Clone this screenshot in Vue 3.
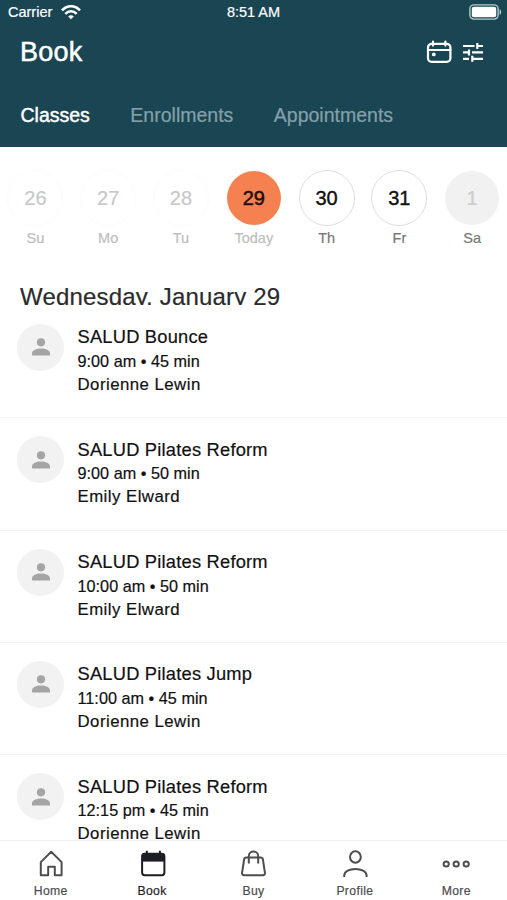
<template>
  <div class="screen">
    <header class="header">
      <div class="status">
        <div class="carrier">
          <span>Carrier</span>
          <svg width="20" height="15" viewBox="0 0 20 15" fill="none" stroke="#fff" stroke-width="2.5">
            <path d="M1 5.4C6-.2 14-.2 19 5.4" />
            <path d="M4.3 8.8c3.3-3.4 8.1-3.4 11.4 0" />
            <path d="M10 14.3 7.2 11.4c1.6-1.5 4-1.5 5.6 0Z" fill="#fff" stroke="none" />
          </svg>
        </div>
        <span class="clock">8:51 AM</span>
        <svg class="battery" width="33" height="16" viewBox="0 0 33 16">
          <rect x=".9" y=".9" width="28.2" height="14.2" rx="4" fill="none" stroke="#bacbd0" stroke-width="1.4" />
          <rect x="2.8" y="2.8" width="24.4" height="10.4" rx="2" fill="#fff" />
          <path d="M30.6 5.2c2 .8 2 4.8 0 5.6Z" fill="#c5d3d7" />
        </svg>
      </div>

      <div class="title-row">
        <h1>Book</h1>
        <div class="actions">
          <svg width="26" height="24" viewBox="0 0 26 24" fill="none" stroke="#fff" stroke-width="2.2" stroke-linecap="round">
            <rect x="2" y="3.8" width="22.4" height="18" rx="3.6" />
            <path d="M2 10h22.4M7 1.6v4M19.4 1.6v4" />
            <circle cx="7.8" cy="14.4" r="1.9" fill="#fff" stroke="none" />
          </svg>
          <svg width="20" height="20" viewBox="0 0 20 20" fill="none" stroke="#fff" stroke-width="2.2">
            <path d="M0 4h11.5M14.3 4H20M14.3 1v6M0 10.4h6M6 7.4v6M9 10.4h11M0 16.8h6M9.3 16.8H20M9.3 13.8v6" />
          </svg>
        </div>
      </div>

      <nav class="tabs">
        <span v-for="(tab, i) in tabs" :key="tab" :class="{ active: i === 0 }">{{ tab }}</span>
      </nav>
    </header>

    <section class="week">
      <div v-for="day in days" :key="day.num" class="day" :class="day.state">
        <span class="num">{{ day.num }}</span>
        <span class="name">{{ day.name }}</span>
      </div>
    </section>

    <h2 class="date-title">Wednesday, January 29</h2>

    <main class="list">
      <article v-for="(item, i) in classes" :key="i" class="item">
        <div class="avatar">
          <svg width="18" height="18" viewBox="0 0 18 18" fill="#a5a5a5">
            <circle cx="9" cy="4.3" r="4.1" />
            <path d="M0 17.6v-2.2c0-3.2 4.5-4.8 9-4.8s9 1.6 9 4.8v2.2Z" />
          </svg>
        </div>
        <div class="info">
          <div class="class-name">{{ item.name }}</div>
          <div class="time">{{ item.time }} • {{ item.length }} min</div>
          <div class="teacher">{{ item.teacher }}</div>
        </div>
      </article>
    </main>

    <footer class="bottom-nav">
      <div class="nav-item">
        <svg width="30" height="30" viewBox="0 0 30 30">
          <path d="M4.8 26.2V13.1L15.2 2.8l10.4 10.3v13.1h-6.8v-8.4h-6.6v8.4Z" />
        </svg>
        <span>Home</span>
      </div>
      <div class="nav-item current">
        <svg width="30" height="30" viewBox="0 0 30 30">
          <rect x="5.1" y="4.8" width="22.3" height="21.4" rx="2.6" />
          <path d="M5 5h22.4v7.6H5Z" fill="#1d1e25" stroke="none" />
          <path d="M9.8 1.8V6M22.9 1.8V6" />
        </svg>
        <span>Book</span>
      </div>
      <div class="nav-item">
        <svg width="30" height="30" viewBox="0 0 30 30">
          <path d="M8.3 8.6h14.4c1.3 0 2 .6 2.2 1.8l2 13.2c.3 1.6-.6 2.6-2 2.6H6.1c-1.4 0-2.3-1-2-2.6l2-13.2c.2-1.2.9-1.8 2.2-1.8Z" />
          <path d="M10.8 14.5V7.2c0-6.2 9.4-6.2 9.4 0v7.3" />
        </svg>
        <span>Buy</span>
      </div>
      <div class="nav-item">
        <svg width="30" height="30" viewBox="0 0 30 30">
          <ellipse cx="15.4" cy="8" rx="5.4" ry="5.7" />
          <path d="M4.2 28v-1.3c0-9 22.4-9 22.4 0V28" />
        </svg>
        <span>Profile</span>
      </div>
      <div class="nav-item">
        <svg width="30" height="30" viewBox="0 0 30 30">
          <circle cx="5.2" cy="15" r="2.6" />
          <circle cx="15.2" cy="15" r="2.6" />
          <circle cx="25.2" cy="15" r="2.6" />
        </svg>
        <span>More</span>
      </div>
    </footer>
  </div>
</template>

<script setup>
const tabs = ['Classes', 'Enrollments', 'Appointments']

const days = [
  { num: 26, name: 'Su', state: 'past' },
  { num: 27, name: 'Mo', state: 'past' },
  { num: 28, name: 'Tu', state: 'past' },
  { num: 29, name: 'Today', state: 'today' },
  { num: 30, name: 'Th', state: 'open' },
  { num: 31, name: 'Fr', state: 'open' },
  { num: 1, name: 'Sa', state: 'closed' },
]

const classes = [
  { name: 'SALUD Bounce', time: '9:00 am', length: 45, teacher: 'Dorienne Lewin' },
  { name: 'SALUD Pilates Reform', time: '9:00 am', length: 50, teacher: 'Emily Elward' },
  { name: 'SALUD Pilates Reform', time: '10:00 am', length: 50, teacher: 'Emily Elward' },
  { name: 'SALUD Pilates Jump', time: '11:00 am', length: 45, teacher: 'Dorienne Lewin' },
  { name: 'SALUD Pilates Reform', time: '12:15 pm', length: 45, teacher: 'Dorienne Lewin' },
]
</script>

<style>
body {
  margin: 0;
  overflow: hidden;
}
</style>

<style scoped>
.screen {
  width: 507px;
  height: 900px;
  display: flex;
  flex-direction: column;
  overflow: hidden;
  background: #fff;
  color: #111;
  font-family: 'Liberation Sans', Arial, sans-serif;
}

/* header */
.header {
  flex: none;
  height: 147px;
  box-sizing: border-box;
  background: #1a4552;
  color: #fff;
}
.status {
  display: grid;
  grid-template-columns: 1fr auto 1fr;
  align-items: center;
  height: 24px;
  padding: 0 5px 0 8px;
  font-size: 14.5px;
  -webkit-text-stroke: 0.2px;
}
.carrier {
  display: flex;
  align-items: center;
  gap: 9px;
}
.clock {
  margin-left: -3px;
}
.battery {
  justify-self: end;
}
.title-row {
  display: flex;
  align-items: center;
  justify-content: space-between;
  height: 56px;
  padding: 0 24px 0 20px;
}
h1 {
  margin: 0;
  font-size: 27px;
  font-weight: 400;
  letter-spacing: 0.2px;
  -webkit-text-stroke: 0.5px;
}
.actions {
  display: flex;
  align-items: center;
  gap: 11px;
}
.tabs {
  display: flex;
  gap: 40.5px;
  padding: 23px 20.5px 0;
  font-size: 19.5px;
  line-height: 24px;
  color: #84a1aa;
  -webkit-text-stroke: 0.2px;
}
.tabs .active {
  color: #fff;
  -webkit-text-stroke: 0.4px;
}

/* week strip */
.week {
  flex: none;
  display: grid;
  grid-template-columns: repeat(7, 72.8px);
  height: 114px;
  box-sizing: border-box;
  padding-top: 23px;
  margin-left: -1px;
}
.day {
  display: flex;
  flex-direction: column;
  align-items: center;
}
.num {
  width: 56px;
  height: 56px;
  box-sizing: border-box;
  border: 1px solid transparent;
  border-radius: 50%;
  font-size: 20px;
  line-height: 54px;
  text-align: center;
  -webkit-text-stroke: 0.2px;
}
.name {
  margin-top: 4px;
  font-size: 14.5px;
  line-height: 17px;
  color: #bdbdbd;
  -webkit-text-stroke: 0.2px;
}
.past .num {
  border-color: #fbfbfb;
  color: #c8c8c8;
}
.today .num {
  background: #f68150;
  background-clip: padding-box;
  color: #1c0e08;
  -webkit-text-stroke: 0.5px;
}
.open .num {
  border-color: #dedee2;
  -webkit-text-stroke: 0.4px;
}
.closed .num {
  background: #f1f1f1;
  background-clip: padding-box;
  color: #cbcbcb;
}
.open .name,
.closed .name {
  color: #777;
}

/* the heading box is shorter than its line, descenders are cut off */
.date-title {
  flex: none;
  height: 21px;
  margin: 23px 0 0.8px 20px;
  overflow: hidden;
  font-size: 24px;
  font-weight: 400;
  line-height: 25px;
  letter-spacing: 0.17px;
  color: #2b2b2b;
  -webkit-text-stroke: 0.2px;
}

/* class list */
.list {
  flex: 1;
  min-height: 0;
  overflow: hidden;
}
.item {
  display: flex;
  gap: 13.5px;
  height: 112.4px;
  box-sizing: border-box;
  padding: 18px 17px 0;
  border-bottom: 1px solid #f3f3f3;
}
.avatar {
  flex: none;
  display: flex;
  align-items: center;
  justify-content: center;
  width: 47px;
  height: 47px;
  border-radius: 50%;
  background: #f2f2f2;
}
.info {
  padding-top: 1.4px;
  white-space: nowrap;
  -webkit-text-stroke: 0.2px;
}
.class-name {
  margin-bottom: 0.6px;
  font-size: 18.3px;
  line-height: 24px;
  letter-spacing: 0.22px;
}
.time {
  font-size: 16.2px;
  line-height: 23px;
  letter-spacing: 0.03px;
}
.teacher {
  font-size: 16.8px;
  line-height: 23px;
  letter-spacing: 0.47px;
}

/* bottom navigation */
.bottom-nav {
  flex: none;
  display: grid;
  grid-template-columns: repeat(5, 1fr);
  height: 60px;
  box-sizing: border-box;
  border-top: 1px solid #eee;
  background: #fff;
}
.nav-item {
  display: flex;
  flex-direction: column;
  align-items: center;
  padding-top: 8px;
  color: #4d4d50;
  font-size: 12.2px;
  line-height: 14px;
  letter-spacing: 0.35px;
  -webkit-text-stroke: 0.2px;
}
.nav-item svg {
  fill: none;
  stroke: #4d4d50;
  stroke-width: 2;
  stroke-linejoin: round;
}
.nav-item span {
  margin-top: 5px;
}
.current {
  color: #1d1e25;
}
.current svg {
  stroke: #1d1e25;
}
</style>
